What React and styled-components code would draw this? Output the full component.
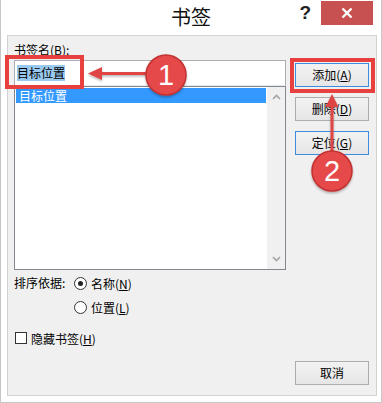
import React from 'react';
import styled, { createGlobalStyle } from 'styled-components';

const GlobalStyle = createGlobalStyle`
  html, body {
    margin: 0;
    padding: 0;
    background: #fff;
  }
  body {
    font-family: "Noto Sans CJK SC", "Noto Sans", sans-serif;
    font-size: 12px;
    color: #000;
  }
`;

const Window = styled.div`
  position: relative;
  width: 382px;
  height: 403px;
  box-sizing: border-box;
  background: #fff;
  border: 1px solid #c6c6c6;
  border-top: none;
  display: flex;
  flex-direction: column;
`;

const TitleBar = styled.div`
  height: 35px;
  display: grid;
  grid-template-columns: 1fr auto 1fr;
  align-items: start;
`;

const Title = styled.div`
  grid-column: 2;
  font-size: 20px;
  line-height: 34px;
  color: #111;
`;

const TitleButtons = styled.div`
  grid-column: 3;
  justify-self: end;
  display: flex;
  align-items: flex-start;
  gap: 10px;
  padding-right: 8px;
`;

const Help = styled.div`
  font-family: "Liberation Sans", Arial, sans-serif;
  font-weight: bold;
  font-size: 19px;
  line-height: 26px;
  color: #222;
`;

const Close = styled.div`
  width: 52px;
  height: 24px;
  margin-top: 1px;
  background: #c75050;
  display: flex;
  align-items: center;
  justify-content: center;
`;

const Panel = styled.div`
  flex: 1;
  margin: 0 4px 6px 6px;
  background: #f0f0f0;
  border: 1px solid #d2d2d2;
  padding: 6px 7px 0 6px;
  display: flex;
  flex-direction: column;
`;

const Main = styled.div`
  display: grid;
  grid-template-columns: 272px 74px;
  column-gap: 9px;
`;

const LeftCol = styled.div`
  display: flex;
  flex-direction: column;
`;

const FieldLabel = styled.div`
  line-height: 16px;
  height: 16px;
  margin-bottom: 2px;
`;

const Key = styled.span`
  text-decoration: underline;
  text-underline-offset: 1px;
`;

const NameInput = styled.div`
  height: 26px;
  box-sizing: border-box;
  background: #fff;
  border: 1px solid #abadb3;
  border-bottom-color: #e3e9ef;
  padding: 0 2px;
  display: flex;
  align-items: center;
`;

const Selected = styled.span`
  background: #99c9ef;
  line-height: 16px;
`;

const ListBox = styled.div`
  height: 184px;
  box-sizing: border-box;
  background: #fff;
  border: 1px solid #828790;
  display: flex;
`;

const Items = styled.div`
  flex: 1;
  padding: 1px;
`;

const Item = styled.div`
  height: 15px;
  line-height: 15px;
  padding-left: 3px;
  background: ${(p) => (p.active ? '#3399ff' : 'transparent')};
  color: ${(p) => (p.active ? '#fff' : '#000')};
`;

const ScrollBar = styled.div`
  width: 18px;
  background: #f0f0f0;
  display: flex;
  flex-direction: column;
  justify-content: space-between;
  align-items: center;
  padding: 7px 0;
`;

const RightCol = styled.div`
  display: flex;
  flex-direction: column;
  gap: 10px;
  padding-top: 21px;
`;

const Button = styled.div`
  height: 24px;
  box-sizing: border-box;
  border: 1px solid ${(p) => (p.focused ? '#3c8de0' : '#adadad')};
  background: linear-gradient(#f2f2f2, #e6e6e6);
  display: flex;
  align-items: center;
  justify-content: center;
  line-height: 16px;
`;

const SortRow = styled.div`
  display: flex;
  margin-top: 2px;
`;

const SortLabel = styled.div`
  width: 60px;
  line-height: 22px;
`;

const Options = styled.div`
  display: flex;
  flex-direction: column;
  gap: 2px;
`;

const Option = styled.div`
  height: 22px;
  display: flex;
  align-items: center;
  gap: 4px;
`;

const Radio = styled.span`
  width: 13px;
  height: 13px;
  box-sizing: border-box;
  border-radius: 50%;
  border: 1px solid #333;
  background: #fff;
  display: flex;
  align-items: center;
  justify-content: center;
  &::after {
    content: '';
    width: 5px;
    height: 5px;
    border-radius: 50%;
    background: ${(p) => (p.checked ? '#222' : 'transparent')};
  }
`;

const CheckRow = styled.div`
  height: 20px;
  margin-top: 10px;
  display: flex;
  align-items: center;
  gap: 4px;
`;

const CheckBox = styled.span`
  width: 12px;
  height: 12px;
  margin-left: 1px;
  box-sizing: border-box;
  border: 1px solid #333;
  background: #fff;
`;

const Footer = styled.div`
  display: flex;
  justify-content: flex-end;
  margin-top: 13px;
`;

const CancelButton = styled(Button)`
  width: 74px;
`;

const Overlay = styled.svg`
  position: absolute;
  left: 0;
  top: 0;
  pointer-events: none;
`;

const Chevron = ({ up }) => (
  <svg width="9" height="6" viewBox="0 0 9 6">
    <path
      d={up ? 'M1 5 L4.5 1.5 L8 5' : 'M1 1 L4.5 4.5 L8 1'}
      fill="none"
      stroke="#a3a3a3"
      strokeWidth="1.6"
    />
  </svg>
);

const Marker = ({ cx, cy, n }) => (
  <g>
    <circle cx={cx} cy={cy} r="20" fill="#e64848" stroke="#c23232" strokeWidth="1.5" filter="url(#shadow)" />
    <text
      x={cx}
      y={cy + 10}
      textAnchor="middle"
      fontFamily="Liberation Sans, Arial, sans-serif"
      fontSize="29"
      fill="#fff"
    >
      {n}
    </text>
  </g>
);

const Annotations = () => (
  <Overlay width="382" height="403" viewBox="0 0 382 403">
    <defs>
      <filter id="shadow" x="-20%" y="-20%" width="140%" height="160%">
        <feDropShadow dx="0" dy="1.5" stdDeviation="1" floodColor="#000" floodOpacity="0.3" />
      </filter>
    </defs>
    <rect x="6" y="57" width="75" height="30" fill="none" stroke="#e8403e" strokeWidth="4" />
    <rect x="291" y="60" width="81" height="31" fill="none" stroke="#e8403e" strokeWidth="4" />
    <g filter="url(#shadow)">
      <line x1="146" y1="73.5" x2="98" y2="73.5" stroke="#e04444" strokeWidth="3" />
      <path d="M87 73.5 L101 67 L101 80 Z" fill="#e04444" />
      <line x1="331" y1="152" x2="331" y2="104" stroke="#e04444" strokeWidth="3" />
      <path d="M331 94 L324.5 107 L337.5 107 Z" fill="#e04444" />
    </g>
    <Marker cx={165} cy={75} n="1" />
    <Marker cx={331} cy={171} n="2" />
  </Overlay>
);

export default function App() {
  return (
    <>
      <GlobalStyle />
      <Window>
        <TitleBar>
          <Title>书签</Title>
          <TitleButtons>
            <Help>?</Help>
            <Close>
              <svg width="12" height="12" viewBox="0 0 12 12">
                <path d="M1.5 1.5 L10.5 10.5 M10.5 1.5 L1.5 10.5" stroke="#fff" strokeWidth="2.4" />
              </svg>
            </Close>
          </TitleButtons>
        </TitleBar>
        <Panel>
          <Main>
            <LeftCol>
              <FieldLabel>
                书签名(<Key>B</Key>):
              </FieldLabel>
              <NameInput>
                <Selected>目标位置</Selected>
              </NameInput>
              <ListBox>
                <Items>
                  <Item active>目标位置</Item>
                </Items>
                <ScrollBar>
                  <Chevron up />
                  <Chevron />
                </ScrollBar>
              </ListBox>
            </LeftCol>
            <RightCol>
              <Button focused>
                <span>添加(<Key>A</Key>)</span>
              </Button>
              <Button>
                <span>删除(<Key>D</Key>)</span>
              </Button>
              <Button focused>
                <span>定位(<Key>G</Key>)</span>
              </Button>
            </RightCol>
          </Main>
          <SortRow>
            <SortLabel>排序依据:</SortLabel>
            <Options>
              <Option>
                <Radio checked />
                <span>名称(<Key>N</Key>)</span>
              </Option>
              <Option>
                <Radio />
                <span>位置(<Key>L</Key>)</span>
              </Option>
            </Options>
          </SortRow>
          <CheckRow>
            <CheckBox />
            <span>隐藏书签(<Key>H</Key>)</span>
          </CheckRow>
          <Footer>
            <CancelButton>取消</CancelButton>
          </Footer>
        </Panel>
        <Annotations />
      </Window>
    </>
  );
}
